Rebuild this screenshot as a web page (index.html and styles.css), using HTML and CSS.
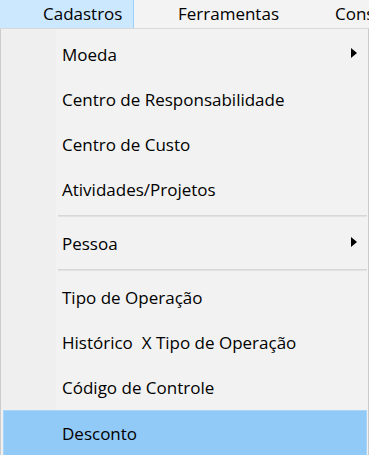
FILE: index.html
```html
<!DOCTYPE html>
<html lang="pt">
<head>
<meta charset="utf-8">
<link rel="stylesheet" href="styles.css">
</head>
<body>
<div class="menubar">
  <div class="mb-item mb-active">Cadastros</div>
  <div class="mb-item mb-ferr">Ferramentas</div>
  <div class="mb-item mb-cons">Consultas</div>
</div>
<div class="menu">
  <div class="row sub"><span>Moeda</span><i class="arrow"></i></div>
  <div class="row"><span>Centro de Responsabilidade</span></div>
  <div class="row"><span>Centro de Custo</span></div>
  <div class="row"><span>Atividades/Projetos</span></div>
  <div class="sep"></div>
  <div class="row sub"><span>Pessoa</span><i class="arrow"></i></div>
  <div class="sep"></div>
  <div class="row"><span>Tipo de Operação</span></div>
  <div class="row"><span>Histórico&nbsp; X Tipo de Operação</span></div>
  <div class="row"><span>Código de Controle</span></div>
  <div class="row hot"><span>Desconto</span></div>
</div>
</body>
</html>
```
FILE: styles.css
```css
html, body {
  margin: 0;
  padding: 0;
  width: 369px;
  height: 455px;
  overflow: hidden;
  background: #f0f0f0;
  font-family: "Open Sans", "Noto Sans", sans-serif;
  font-size: 17px;
  color: #000;
}
.menubar {
  display: flex;
  height: 28px;
  background: #f3f3f3;
  border-bottom: 1px solid #d9d9d9;
  white-space: nowrap;
  overflow: hidden;
}
.mb-item {
  height: 28px;
  line-height: 28px;
  box-sizing: border-box;
  flex: none;
}
.mb-active {
  background: #cce8ff;
  border-right: 1px solid #99d1ff;
  padding-left: 43px;
  padding-right: 10px;
  width: 134px;
}
.mb-ferr {
  margin-left: 44px;
}
.mb-cons {
  margin-left: 56px;
}
.menu {
  box-sizing: border-box;
  width: 369px;
  height: 426px;
  border-left: 1px solid #cccccc;
  border-right: 1px solid #cccccc;
  padding: 3px 1px 0 2px;
  background: linear-gradient(to right, #efefef 0, #efefef 55px, #f2f2f2 55px);
}
.row {
  height: 45px;
  line-height: 45px;
  padding-left: 59px;
  padding-right: 10px;
  display: flex;
  align-items: center;
  justify-content: space-between;
  box-sizing: border-box;
  white-space: nowrap;
}
.row span {
  line-height: 45px;
}
.arrow {
  display: block;
  width: 0;
  height: 0;
  border-left: 6px solid #000;
  border-top: 5px solid transparent;
  border-bottom: 5px solid transparent;
  margin-top: -4px;
}
.sep {
  height: 9px;
  box-sizing: border-box;
  padding-top: 3px;
  margin-left: 55px;
}
.sep::before {
  content: "";
  display: block;
  height: 1px;
  border-top: 1px solid #d7d7d7;
  background: #e2e2e2;
}
.hot {
  background: #91c9f7;
  border: 1px solid #a9d5f9;
  border-bottom: none;
  padding-left: 58px;
}
```
